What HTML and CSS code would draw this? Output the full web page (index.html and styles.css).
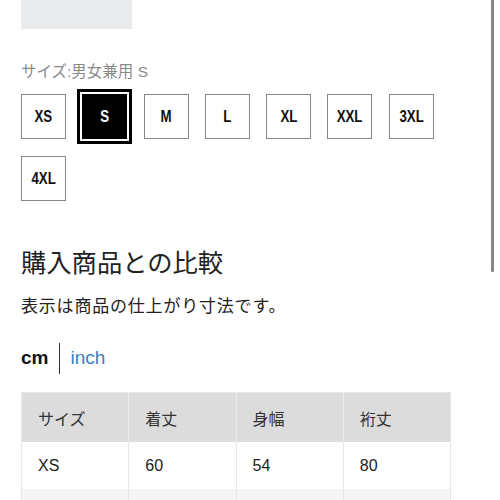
FILE: index.html
```html
<!DOCTYPE html>
<html lang="ja">
<head>
<meta charset="utf-8">
<title>サイズ</title>
<link rel="stylesheet" href="styles.css">
</head>
<body>
<div class="page">
  <div class="swatch"></div>
  <p class="size-label">サイズ:男女兼用 S</p>
  <ul class="sizes">
    <li class="size"><span class="size-text">XS</span></li>
    <li class="size selected"><span class="size-text">S</span></li>
    <li class="size"><span class="size-text">M</span></li>
    <li class="size"><span class="size-text">L</span></li>
    <li class="size"><span class="size-text">XL</span></li>
    <li class="size"><span class="size-text">XXL</span></li>
    <li class="size"><span class="size-text">3XL</span></li>
    <li class="size"><span class="size-text">4XL</span></li>
  </ul>
  <h2 class="title">購入商品との比較</h2>
  <p class="note">表示は商品の仕上がり寸法です。</p>
  <div class="units"><span class="unit-active">cm</span><span class="divider"></span><span class="unit-link">inch</span></div>
  <table class="chart">
    <thead>
      <tr><th>サイズ</th><th>着丈</th><th>身幅</th><th>裄丈</th></tr>
    </thead>
    <tbody>
      <tr><td>XS</td><td>60</td><td>54</td><td>80</td></tr>
      <tr class="alt"><td></td><td></td><td></td><td></td></tr>
    </tbody>
  </table>
</div>
<div class="scroll-thumb"></div>
</body>
</html>
```
FILE: styles.css
```css
html, body {
  margin: 0;
  padding: 0;
  overflow: hidden;
  background: #fff;
}
body {
  font-family: "Liberation Sans", "Noto Sans CJK JP", sans-serif;
  color: #1b1b1b;
}
.page {
  padding: 0 21px;
}
.swatch {
  width: 111px;
  height: 29px;
  background: #e9eaec;
}
.size-label {
  margin: 34px 0 0;
  font-size: 15.5px;
  line-height: 18px;
  color: #8a8a8a;
}
.sizes {
  list-style: none;
  margin: 13px 0 0;
  padding: 0;
  display: flex;
  flex-wrap: wrap;
  column-gap: 16.3px;
  row-gap: 17px;
  width: 440px;
}
.size {
  box-sizing: border-box;
  width: 45px;
  height: 45px;
  border: 1px solid #858585;
  display: flex;
  align-items: center;
  justify-content: center;
  font-weight: bold;
  font-size: 17px;
  color: #111;
}
.size-text {
  display: inline-block;
  transform: scaleX(0.78);
}
.size.selected {
  background: #000;
  border-color: #000;
  color: #fff;
  outline: 3px solid #000;
  outline-offset: 2px;
}
.title {
  margin: 44px 0 0;
  font-family: "Noto Sans CJK JP", sans-serif;
  font-weight: 400;
  font-size: 25.3px;
  line-height: 32px;
  color: #222;
}
.note {
  margin: 16px 0 0;
  font-family: "Noto Sans CJK JP", sans-serif;
  font-size: 17px;
  letter-spacing: 0.8px;
  line-height: 24px;
  color: #222;
}
.units {
  margin: 25px 0 0;
  display: flex;
  align-items: center;
  height: 32px;
  font-size: 19px;
}
.unit-active {
  font-weight: bold;
  color: #111;
}
.divider {
  width: 1px;
  height: 31px;
  background: #333;
  margin: 0 10px 0 11px;
}
.unit-link {
  color: #3b7fbf;
}
.chart {
  margin-top: 18px;
  width: 430px;
  border-collapse: collapse;
  table-layout: fixed;
  border: 1px solid #e6e6e6;
}
.chart th, .chart td {
  text-align: left;
  padding: 0 0 0 16px;
  font-size: 16px;
  border-left: 1px solid #e8e8e8;
}
.chart th {
  height: 49px;
  background: #dcdcdc;
  font-family: "Noto Sans CJK JP", sans-serif;
  font-weight: 400;
  color: #333;
  border-left-color: #ececec;
}
.chart td {
  height: 47px;
  color: #222;
}
.chart tr.alt td {
  background: #f5f5f5;
}
.scroll-thumb {
  position: absolute;
  top: 0;
  left: 491px;
  width: 3px;
  height: 272px;
  background: #868686;
  border-radius: 0 0 2px 2px;
}
```
